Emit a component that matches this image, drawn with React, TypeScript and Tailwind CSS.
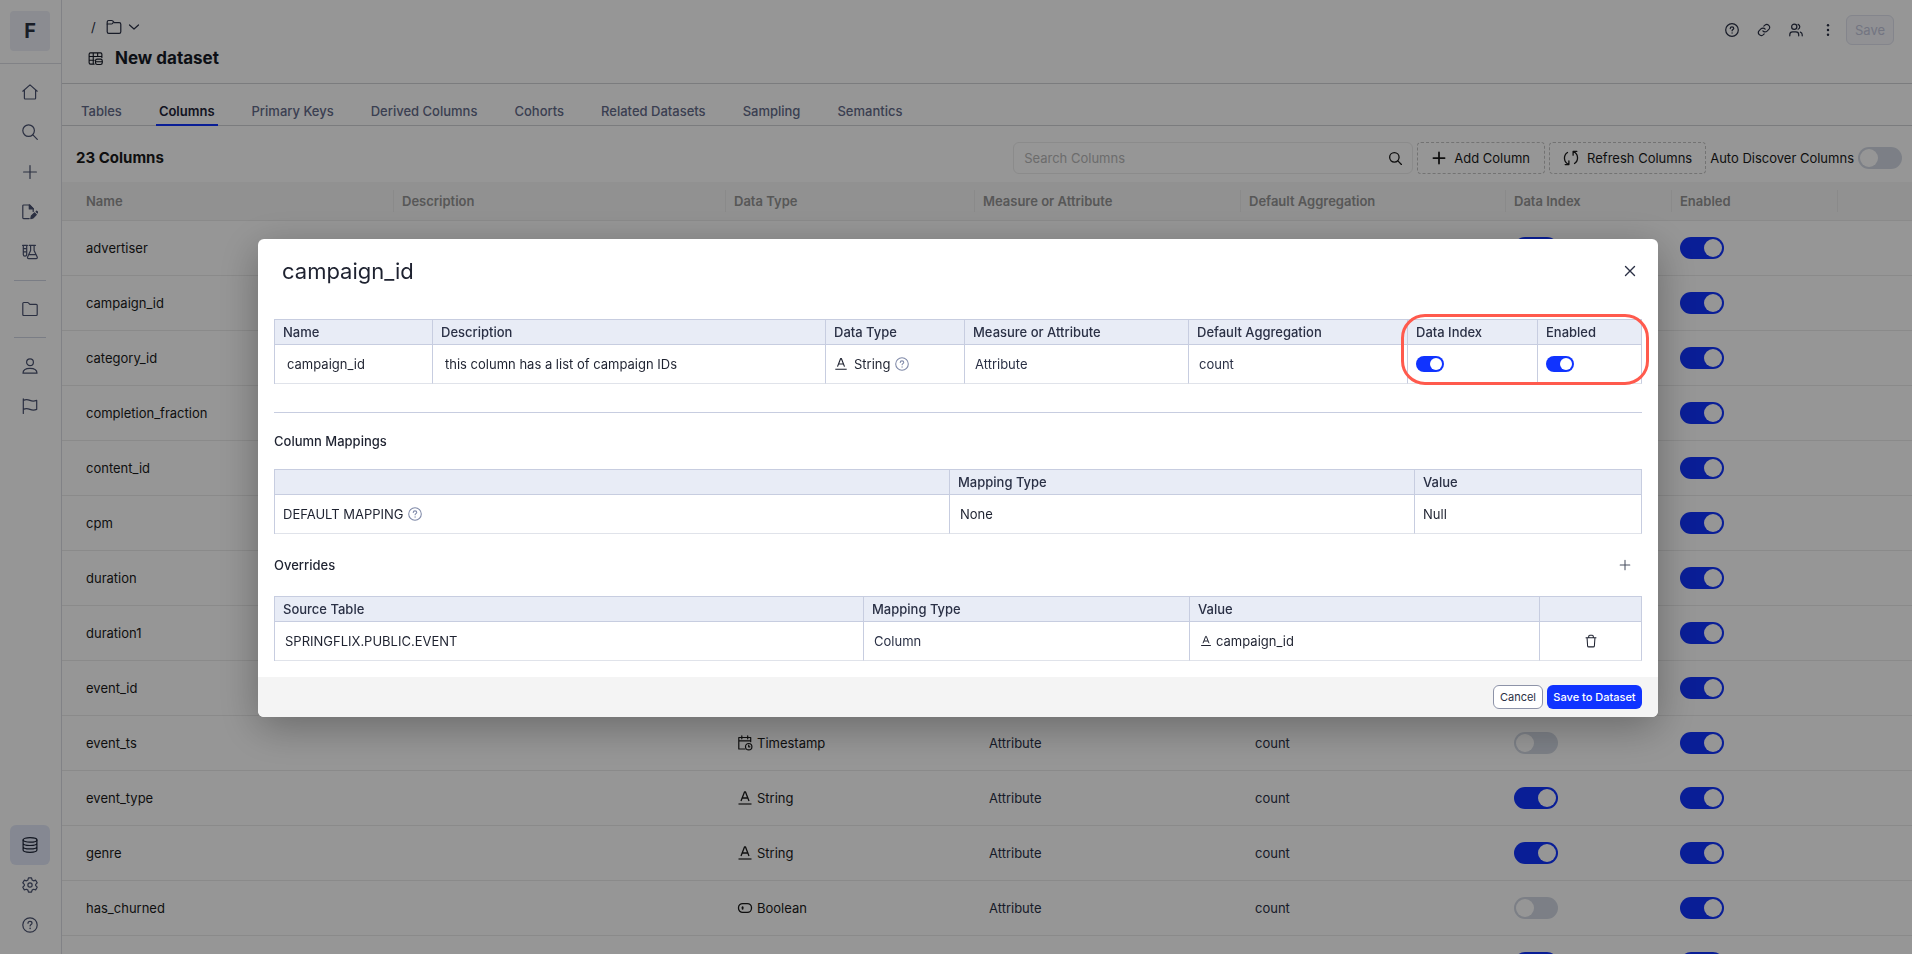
import { useState } from 'react';
import type { ReactNode, SVGProps } from 'react';

type IconProps = SVGProps<SVGSVGElement>;

function Svg({ children, ...props }: IconProps) {
  return (
    <svg
      viewBox="0 0 16 16"
      width={16}
      height={16}
      fill="none"
      stroke="currentColor"
      strokeWidth={1.2}
      strokeLinecap="round"
      strokeLinejoin="round"
      aria-hidden="true"
      className="flex-shrink-0"
      {...props}
    >
      {children}
    </svg>
  );
}

const HomeIcon = (p: IconProps) => (
  <Svg {...p}>
    <path d="M.8 7.2 8 .9l7.2 6.3M2.4 5.9v8.4c0 .4.3.7.7.7h9.8c.4 0 .7-.3.7-.7V5.9" />
  </Svg>
);

const SearchIcon = (p: IconProps) => (
  <Svg {...p}>
    <circle cx="6.6" cy="6.6" r="5.8" />
    <path d="m10.9 10.9 4.4 4.4" />
  </Svg>
);

const PlusIcon = (p: IconProps) => (
  <Svg {...p}>
    <path d="M8 1.6v12.8M1.6 8h12.8" />
  </Svg>
);

const DocEditIcon = (p: IconProps) => (
  <Svg {...p}>
    <path d="M7.2 14.6H1.6a.8.8 0 0 1-.8-.8V1.8c0-.5.4-.8.8-.8h6l3.6 3.6v2.9" />
    <path d="M7.3 1v4h4z" fill="currentColor" />
    <path d="m8.8 14.6.6-2.6 3.1-3.1 1.8 1.8-3.1 3.2z" fill="currentColor" />
    <path d="m14.6 7.6.8.8" strokeWidth={2} />
  </Svg>
);

const LabIcon = (p: IconProps) => (
  <Svg {...p}>
    <path d="M.6 1.4h4.8M1.3 1.4v9.1a1.7 1.7 0 0 0 3.4 0V1.4M1.3 4.6h3.4M1.3 7.8h3.4" />
    <path d="M7.2 1.4h6.2M8.6 1.4v5L5.6 13c-.3.8.1 1.6 1 1.6h7.6c.8 0 1.3-.8 1-1.6l-3.1-6.6v-5M7 10.6h7" />
  </Svg>
);

const FolderIcon = (p: IconProps) => (
  <Svg {...p}>
    <path d="M.8 2.5c0-.6.4-1 1-1h3.9c.3 0 .5.1.7.3l1.5 1.5h6.3c.6 0 1 .4 1 1v9.2c0 .6-.4 1-1 1H1.8c-.6 0-1-.4-1-1z" />
  </Svg>
);

const FolderTabIcon = (p: IconProps) => (
  <Svg {...p}>
    <path d="M1.2 5V3c0-.9.6-1.5 1.5-1.5h3c.4 0 .7.1 1 .4l1.5 1.7h5c.9 0 1.6.7 1.6 1.6v7.5c0 .9-.7 1.6-1.6 1.6H2.8c-.9 0-1.6-.7-1.6-1.6z" />
    <path d="M1.2 5h4.3c.4 0 .8-.2 1-.5l.7-.9" />
  </Svg>
);

const UserIcon = (p: IconProps) => (
  <Svg {...p}>
    <circle cx="8" cy="4.2" r="3.4" />
    <path d="M1 15.2c0-3 2.6-4.9 7-4.9s7 1.9 7 4.9z" />
  </Svg>
);

const FlagIcon = (p: IconProps) => (
  <Svg {...p}>
    <path d="M1.3.8v14.6M1.3 2.4c2.6-1.3 4.6-.9 6.7 0s4.4.8 6.7 0v9c-2.3.9-4.6.8-6.7 0s-4.1-1.2-6.7 0" />
  </Svg>
);

const DatabaseIcon = (p: IconProps) => (
  <Svg {...p}>
    <ellipse cx="8" cy="2.9" rx="6.9" ry="2.2" />
    <path d="M1.1 2.9v10.2c0 1.2 3.1 2.2 6.9 2.2s6.9-1 6.9-2.2V2.9M1.1 6.3c0 1.2 3.1 2.2 6.9 2.2s6.9-1 6.9-2.2M1.1 9.7c0 1.2 3.1 2.2 6.9 2.2s6.9-1 6.9-2.2" />
  </Svg>
);

const GearIcon = (p: IconProps) => (
  <Svg {...p} viewBox="0 0 24 24" strokeWidth={1.8}>
    <path d="M9.7 1.3h4.6l.8 3.1 2.3 1.3 3.1-.9 2.3 4-2.3 2.3v1.9l2.3 2.3-2.3 4-3.1-.9-2.3 1.3-.8 3.1H9.7l-.8-3.1-2.3-1.3-3.1.9-2.3-4 2.3-2.3v-1.9L1.2 8.8l2.3-4 3.1.9 2.3-1.3z" />
    <circle cx="12" cy="12" r="3.2" />
  </Svg>
);

const HelpIcon = (p: IconProps) => (
  <Svg {...p}>
    <circle cx="8" cy="8" r="7.2" />
    <path d="M6 6.3c0-1.2.9-1.9 2-1.9s2 .7 2 1.8c0 1.3-1.9 1.4-1.9 2.7" />
    <path d="M8.1 11.3v.1" strokeWidth={1.5} />
  </Svg>
);

const LinkIcon = (p: IconProps) => (
  <Svg {...p} viewBox="0 0 24 24" strokeWidth={2}>
    <path d="M10 13.5a5 5 0 0 0 7.3.4l3.3-3.3a5 5 0 0 0-7-7l-1.9 1.7" />
    <path d="M14 10.5a5 5 0 0 0-7.3-.4l-3.3 3.3a5 5 0 0 0 7 7l1.9-1.7" />
  </Svg>
);

const UsersIcon = (p: IconProps) => (
  <Svg {...p}>
    <circle cx="6" cy="4.3" r="3" />
    <path d="M.9 14.6v-1.2c0-2 1.3-3.2 3.2-3.2h3.8c1.9 0 3.2 1.2 3.2 3.2v1.2" />
    <path d="M10.4 1.5a3 3 0 0 1 0 5.6M13 10.4c1.3.4 2.1 1.5 2.1 3v1.2" />
  </Svg>
);

const DotsIcon = (p: IconProps) => (
  <Svg {...p} fill="currentColor" stroke="none">
    <circle cx="8" cy="2.5" r="1.4" />
    <circle cx="8" cy="8" r="1.4" />
    <circle cx="8" cy="13.5" r="1.4" />
  </Svg>
);

const ChevronIcon = (p: IconProps) => (
  <Svg {...p}>
    <path d="m3.5 6 4.5 4 4.5-4" />
  </Svg>
);

const DatasetIcon = (p: IconProps) => (
  <Svg {...p}>
    <path d="M6.5 14H2.600c-.8 0-1.400-.6-1.400-1.400V3.400C1.200 2.600 1.800 2 2.600 2h10.800c.8 0 1.400.6 1.400 1.400V7M1.200 5.800h13.600M1.200 9.800h5.300M5.600 2v12M10.300 2v3.800" />
    <rect x="8" y="8.6" width="7.2" height="5.8" rx="1.8" />
    <path d="M8.2 11.5h6.8" />
  </Svg>
);

const RefreshIcon = (p: IconProps) => (
  <Svg {...p} strokeWidth={1.3}>
    <path d="M5.600 14.300A6.700 6.700 0 0 1 4.500 2.500M5.900 10.800v3.800H2.200" />
    <path d="M10.400 1.700a6.700 6.700 0 0 1 1.100 11.800M10.100 5.200V1.400h3.700" />
  </Svg>
);

const CloseIcon = (p: IconProps) => (
  <Svg {...p} strokeWidth={1.4}>
    <path d="m3.5 3.5 9 9M12.500 3.500l-9 9" />
  </Svg>
);

const TrashIcon = (p: IconProps) => (
  <Svg {...p}>
    <path d="M2.3 4.2h11.4M5.400 4.200V2.700c0-.7.5-1.200 1.200-1.200h2.800c.7 0 1.200.5 1.200 1.200v1.500M3.500 4.200l.6 9.300c.1.700.6 1.200 1.300 1.200h5.200c.7 0 1.200-.5 1.300-1.200l.6-9.300" />
  </Svg>
);

const StringIcon = (p: IconProps) => (
  <Svg {...p} strokeLinecap="butt">
    <path d="m4 11 3.600-9.200h.8L12 11M5.300 8h5.400" strokeWidth={1.3} />
    <path d="M1.500 14h13" />
  </Svg>
);

const TimestampIcon = (p: IconProps) => (
  <Svg {...p}>
    <path d="M8 14H1.800V2.500h11.900v4.200M1.800 5.800h11.900M4.800.8v3M10.700.8v3" />
    <circle cx="11.7" cy="11.7" r="3.2" />
    <path d="M11.700 10v1.800h1.200" />
  </Svg>
);

const BooleanIcon = (p: IconProps) => (
  <Svg {...p} strokeWidth={1.3}>
    <rect x="1.5" y="3.6" width="13" height="8.8" rx="4.2" />
    <path d="M5.600 7.200v1.600" strokeWidth={1.8} />
  </Svg>
);

type DataType = 'String' | 'Timestamp' | 'Boolean' | 'Number';

interface Column {
  name: string;
  type: DataType;
  indexed: boolean;
}

const COLUMNS: Column[] = [
  { name: 'advertiser', type: 'String', indexed: true },
  { name: 'campaign_id', type: 'String', indexed: true },
  { name: 'category_id', type: 'String', indexed: true },
  { name: 'completion_fraction', type: 'Number', indexed: false },
  { name: 'content_id', type: 'String', indexed: true },
  { name: 'cpm', type: 'Number', indexed: false },
  { name: 'duration', type: 'Number', indexed: false },
  { name: 'duration1', type: 'Number', indexed: false },
  { name: 'event_id', type: 'String', indexed: true },
  { name: 'event_ts', type: 'Timestamp', indexed: false },
  { name: 'event_type', type: 'String', indexed: true },
  { name: 'genre', type: 'String', indexed: true },
  { name: 'has_churned', type: 'Boolean', indexed: false },
  { name: 'platform', type: 'String', indexed: true },
];

const TABS = [
  'Tables',
  'Columns',
  'Primary Keys',
  'Derived Columns',
  'Cohorts',
  'Related Datasets',
  'Sampling',
  'Semantics',
];

function TypeIcon({ type }: { type: DataType }) {
  if (type === 'Timestamp') return <TimestampIcon />;
  if (type === 'Boolean') return <BooleanIcon />;
  return <StringIcon />;
}

function Toggle({
  label,
  initial = false,
  small = false,
}: {
  label: string;
  initial?: boolean;
  small?: boolean;
}) {
  const [on, setOn] = useState(initial);
  const size = small
    ? 'h-4 w-7 before:h-3 before:w-3 checked:before:translate-x-3'
    : 'h-[22px] w-11 before:h-[18px] before:w-[18px] checked:before:translate-x-[22px]';
  return (
    <input
      type="checkbox"
      role="switch"
      aria-label={label}
      checked={on}
      onChange={(e) => setOn(e.target.checked)}
      className={`block flex-shrink-0 cursor-pointer appearance-none rounded-full bg-[#d3d9e4] p-0.5 before:block before:rounded-full before:bg-white checked:bg-[#1033ff] ${size}`}
    />
  );
}

function NavButton({
  label,
  active = false,
  children,
}: {
  label: string;
  active?: boolean;
  children: ReactNode;
}) {
  return (
    <button
      type="button"
      aria-label={label}
      className={`flex h-10 w-10 items-center justify-center rounded-md ${
        active ? 'bg-[#e2e8f8] text-[#1e2538]' : 'text-[#4a5270]'
      }`}
    >
      {children}
    </button>
  );
}

function Sidebar() {
  return (
    <nav className="flex w-[62px] flex-shrink-0 flex-col border-r border-[#dcdee4] pb-[9px]">
      <div className="flex h-16 flex-shrink-0 items-center border-b border-[#dcdee4] pl-[10px]">
        <div className="mb-px flex h-10 w-10 items-center justify-center rounded bg-[#eceef6] text-xl font-bold text-[#2c3242]">
          F
        </div>
      </div>
      <div className="mt-2 flex flex-col pl-[10px]">
        <NavButton label="Home"><HomeIcon /></NavButton>
        <NavButton label="Search"><SearchIcon /></NavButton>
        <NavButton label="Create"><PlusIcon /></NavButton>
        <NavButton label="Drafts"><DocEditIcon /></NavButton>
        <NavButton label="Experiments"><LabIcon /></NavButton>
        <hr className="my-2 ml-1 w-8 border-[#cfd4e2]" />
        <NavButton label="Folders"><FolderIcon /></NavButton>
        <hr className="my-2 ml-1 w-8 border-[#cfd4e2]" />
        <NavButton label="Users"><UserIcon /></NavButton>
        <NavButton label="Alerts"><FlagIcon /></NavButton>
      </div>
      <div className="mt-auto flex flex-col pl-[10px]">
        <NavButton label="Datasets" active><DatabaseIcon /></NavButton>
        <NavButton label="Settings"><GearIcon /></NavButton>
        <NavButton label="Help"><HelpIcon /></NavButton>
      </div>
    </nav>
  );
}

function PageHeader() {
  return (
    <header className="flex h-[84px] flex-shrink-0 justify-between border-b border-[#d2d3d7] pt-[15px] pr-[18px] pl-[26px]">
      <div>
        <div className="flex h-6 items-center text-[#2a3045]">
          <span className="w-[18px] pl-[3px]">/</span>
          <FolderTabIcon />
          <button type="button" aria-label="Choose folder" className="ml-1">
            <ChevronIcon />
          </button>
        </div>
        <div className="mt-[7px] flex h-6 items-center gap-3 text-[#161a26]">
          <DatasetIcon width={15} height={15} />
          <h1 className="text-[17px] font-bold">New dataset</h1>
        </div>
      </div>
      <div className="flex h-[30px] items-center text-[#2a3045]">
        <button type="button" aria-label="Help" className="w-8 pl-[7px]"><HelpIcon width={14} height={14} strokeWidth={1.4} /></button>
        <button type="button" aria-label="Copy link" className="w-8 pl-[7px]"><LinkIcon width={14} height={14} /></button>
        <button type="button" aria-label="Share" className="w-8 pl-[7px]"><UsersIcon width={14} height={14} strokeWidth={1.4} /></button>
        <button type="button" aria-label="More" className="w-8 pl-[7px]"><DotsIcon width={14} height={14} /></button>
        <button
          type="button"
          disabled
          className="h-[30px] w-12 rounded-md border border-[#e0e2ee] bg-[#f6f7fc] text-[#c4c7dc]"
        >
          Save
        </button>
      </div>
    </header>
  );
}

function Tabs() {
  const [active, setActive] = useState('Columns');
  return (
    <div className="flex h-[42px] flex-shrink-0 items-end gap-[31px] border-b border-[#d2d3d7] pl-4">
      {TABS.map((tab) => (
        <button
          key={tab}
          type="button"
          onClick={() => setActive(tab)}
          className={`-mb-px h-[30px] border-b-2 px-[3px] pt-0.5 whitespace-nowrap ${
            tab === active
              ? 'border-[#1033ff] font-semibold text-[#1e2538]'
              : 'border-transparent font-medium text-[#646b8a]'
          }`}
        >
          {tab}
        </button>
      ))}
    </div>
  );
}

function Toolbar() {
  return (
    <div className="flex h-14 flex-shrink-0 items-center justify-between pt-2 pr-[10px] pl-[14px]">
      <h2 className="text-[15px] font-bold text-[#1a1a1a]">23 Columns</h2>
      <div className="flex items-center gap-1 text-[#1a1a1a]">
        <div className="flex h-8 w-[400px] items-center rounded-md border border-[#ececec] px-[10px]">
          <input
            type="text"
            aria-label="Search Columns"
            placeholder="Search Columns"
            className="min-w-0 flex-1 bg-transparent outline-none placeholder:text-[#b8b8b8]"
          />
          <SearchIcon width={13} height={13} strokeWidth={1.6} />
        </div>
        <button type="button" className="flex h-8 w-32 items-center justify-center gap-2 rounded border border-dashed border-[#c4c4c4]">
          <PlusIcon width={14} height={14} strokeWidth={2} />
          Add Column
        </button>
        <button type="button" className="flex h-8 w-[157px] items-center justify-center gap-2 rounded border border-dashed border-[#c4c4c4]">
          <RefreshIcon />
          Refresh Columns
        </button>
        <span>Auto Discover Columns</span>
        <Toggle label="Auto Discover Columns" />
      </div>
    </div>
  );
}

function HeadCell({ children }: { children?: ReactNode }) {
  return (
    <th className="h-[39px] border-b border-[#ebebeb] bg-[#f7f7f7] p-0 text-left font-semibold text-[#949494]">
      <div className="flex h-[22px] items-center border-r border-[#ebebeb] pl-2">
        {children}
      </div>
    </th>
  );
}

function ColumnsTable() {
  return (
    <table className="w-full table-fixed border-separate border-spacing-0 text-[#1a1a1a]">
      <colgroup>
        <col className="w-[332px]" />
        <col />
        <col className="w-[249px]" />
        <col className="w-[266px]" />
        <col className="w-[265px]" />
        <col className="w-[166px]" />
        <col className="w-[166px]" />
        <col className="w-[74px]" />
      </colgroup>
      <thead>
        <tr>
          <HeadCell><span className="pl-4">Name</span></HeadCell>
          <HeadCell>Description</HeadCell>
          <HeadCell>Data Type</HeadCell>
          <HeadCell>Measure or Attribute</HeadCell>
          <HeadCell>Default Aggregation</HeadCell>
          <HeadCell>Data Index</HeadCell>
          <HeadCell>Enabled</HeadCell>
          <th className="border-b border-[#ebebeb] bg-[#f7f7f7]" />
        </tr>
      </thead>
      <tbody className="[&_td]:h-[55px] [&_td]:border-b [&_td]:border-[#ebebeb]">
        {COLUMNS.map((col) => (
          <tr key={col.name}>
            <td className="pl-6">{col.name}</td>
            <td />
            <td className="pl-[11px]">
              <div className="flex items-center gap-1">
                <TypeIcon type={col.type} />
                {col.type}
              </div>
            </td>
            <td className="pl-[14px] text-[#2a3045]">Attribute</td>
            <td className="pl-[14px] text-[#2a3045]">count</td>
            <td className="pl-2">
              <Toggle label={`Index ${col.name}`} initial={col.indexed} />
            </td>
            <td className="pl-2">
              <Toggle label={`Enable ${col.name}`} initial />
            </td>
            <td />
          </tr>
        ))}
      </tbody>
    </table>
  );
}

function ModalTable({
  widths,
  heads,
  children,
}: {
  widths: string[];
  heads: string[];
  children: ReactNode;
}) {
  return (
    <table className="w-full table-fixed border-separate border-spacing-0 border-t border-l border-[#c7cde0] [&_td]:h-[39px] [&_td]:border-r [&_td]:border-b [&_td]:border-r-[#c7cde0] [&_td]:border-b-[#e0e3ea] [&_td]:py-0 [&_th]:h-[25px] [&_th]:border-r [&_th]:border-b [&_th]:border-[#c7cde0]">
      <colgroup>
        {widths.map((w, i) => (
          <col key={i} className={w} />
        ))}
      </colgroup>
      <thead>
        <tr>
          {heads.map((head, i) => (
            <th key={i} className="bg-[#e8ecf6] py-0 pl-2 text-left font-medium text-[#2a3045]">
              {head}
            </th>
          ))}
        </tr>
      </thead>
      <tbody>
        <tr>{children}</tr>
      </tbody>
    </table>
  );
}

function ColumnDialog({ onClose }: { onClose: () => void }) {
  return (
    <div className="fixed inset-0 flex items-center justify-center bg-black/41 pt-0.5 pl-1">
      <div
        role="dialog"
        aria-modal="true"
        aria-labelledby="dialog-title"
        className="w-full max-w-[1400px] overflow-hidden rounded-md bg-white text-[#1e2230] shadow-[0_10px_40px_rgba(0,0,0,0.3)]"
      >
        <div className="flex h-20 items-start justify-between pt-4 pr-5 pl-6">
          <h2 id="dialog-title" className="text-[22px]/8">campaign_id</h2>
          <button type="button" aria-label="Close" onClick={onClose} className="mt-2 text-[#2a3045]">
            <CloseIcon />
          </button>
        </div>

        <div className="px-4 pb-4">
          <div className="relative">
            <ModalTable
              widths={['w-[158px]', '', 'w-[139px]', 'w-[224px]', 'w-[219px]', 'w-[130px]', 'w-[104px]']}
              heads={[
                'Name',
                'Description',
                'Data Type',
                'Measure or Attribute',
                'Default Aggregation',
                'Data Index',
                'Enabled',
              ]}
            >
              <td className="pl-3">campaign_id</td>
              <td className="pl-3">this column has a list of campaign IDs</td>
              <td className="pl-2">
                <div className="flex items-center">
                  <StringIcon width={14} height={14} />
                  <span className="mr-1 ml-1.5">String</span>
                  <HelpIcon width={14} height={14} className="flex-shrink-0 text-[#7f89a8]" />
                </div>
              </td>
              <td className="pl-[10px] text-[#2a3045]">Attribute</td>
              <td className="pl-[10px] text-[#2a3045]">count</td>
              <td className="pl-2"><Toggle label="Data Index" initial small /></td>
              <td className="pl-2"><Toggle label="Enabled" initial small /></td>
            </ModalTable>
            {/* highlight around the two switches */}
            <div className="pointer-events-none absolute -top-[5px] -right-[7px] -bottom-px w-[248px] rounded-3xl border-3 border-[#ff5a4d]" />
          </div>

          <hr className="mt-7 border-[#c7cde0]" />

          <h3 className="flex h-14 items-center font-medium">Column Mappings</h3>
          <ModalTable
            widths={['', 'w-[465px]', 'w-[227px]']}
            heads={['', 'Mapping Type', 'Value']}
          >
            <td className="pl-2">
              <div className="flex items-center gap-1">
                DEFAULT MAPPING
                <HelpIcon width={14} height={14} className="flex-shrink-0 text-[#7f89a8]" />
              </div>
            </td>
            <td className="pl-[10px]">None</td>
            <td className="pl-2">Null</td>
          </ModalTable>

          <div className="flex h-[62px] items-center justify-between pr-[11px]">
            <h3 className="font-medium">Overrides</h3>
            <button type="button" aria-label="Add override" className="text-[#4a5060]">
              <PlusIcon width={12} height={12} strokeWidth={1.4} />
            </button>
          </div>
          <ModalTable
            widths={['', 'w-[326px]', 'w-[350px]', 'w-[102px]']}
            heads={['Source Table', 'Mapping Type', 'Value', '']}
          >
            <td className="pl-[10px]">SPRINGFLIX.PUBLIC.EVENT</td>
            <td className="pl-[10px] text-[#2a3045]">Column</td>
            <td className="pl-[10px]">
              <div className="flex items-center gap-1">
                <StringIcon width={12} height={12} strokeWidth={1.4} />
                campaign_id
              </div>
            </td>
            <td>
              <button type="button" aria-label="Delete override" className="mx-auto block">
                <TrashIcon width={14} height={14} />
              </button>
            </td>
          </ModalTable>
        </div>

        <div className="flex h-10 items-center justify-end gap-1 bg-[#f4f4f4] pr-4 text-[11px]">
          <button
            type="button"
            onClick={onClose}
            className="h-6 w-[50px] rounded-md border border-[#8d93a8] bg-white text-[#2a3045]"
          >
            Cancel
          </button>
          <button type="button" className="h-6 w-[95px] rounded-md bg-[#1033ff] font-medium whitespace-nowrap text-white">
            Save to Dataset
          </button>
        </div>
      </div>
    </div>
  );
}

export default function App() {
  const [open, setOpen] = useState(true);

  return (
    <div className="flex h-screen overflow-hidden bg-white font-[Inter,sans-serif] text-[13px]/5">
      <Sidebar />
      <main className="flex min-w-0 flex-1 flex-col overflow-hidden">
        <PageHeader />
        <Tabs />
        <Toolbar />
        <ColumnsTable />
      </main>
      {open && <ColumnDialog onClose={() => setOpen(false)} />}
    </div>
  );
}
